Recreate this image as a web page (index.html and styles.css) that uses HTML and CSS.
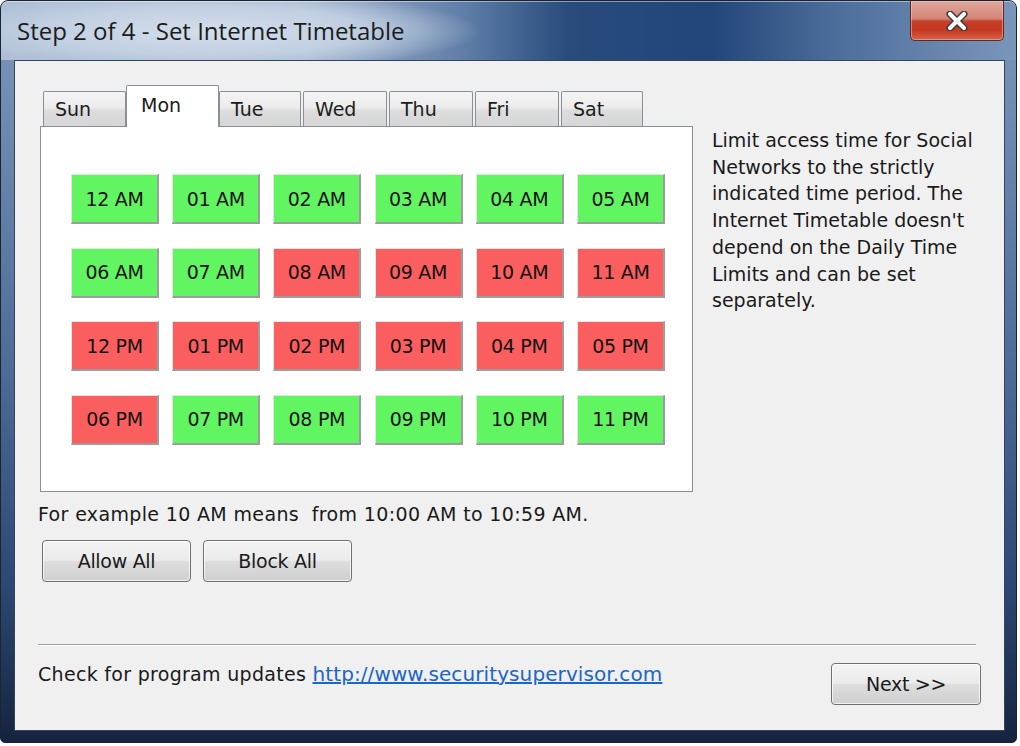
FILE: index.html
```html
<!DOCTYPE html>
<html>
<head>
<meta charset="utf-8">
<title>Step 2 of 4 - Set Internet Timetable</title>
<link rel="stylesheet" href="styles.css">
</head>
<body>
<div class="window">
  <div class="titlebar">
    <div class="title">Step 2 of 4 - Set Internet Timetable</div>
    <div class="close">
      <svg width="24" height="20" viewBox="0 0 24 20">
        <path d="M5 3 L19 17 M19 3 L5 17" stroke="#3a3a3a" stroke-width="7" stroke-linecap="round" fill="none"/>
        <path d="M5 3 L19 17 M19 3 L5 17" stroke="#ffffff" stroke-width="4.2" stroke-linecap="round" fill="none"/>
      </svg>
    </div>
  </div>
  <div class="client">
    <div class="top">
      <div class="leftcol">
        <div class="tabs">
          <div class="tab t-sun">Sun</div>
          <div class="tab t-mon active">Mon</div>
          <div class="tab t-tue">Tue</div>
          <div class="tab t-wed">Wed</div>
          <div class="tab t-thu">Thu</div>
          <div class="tab t-fri">Fri</div>
          <div class="tab t-sat">Sat</div>
        </div>
        <div class="panel">
          <div class="grid">
            <div class="cell on">12 AM</div>
            <div class="cell on">01 AM</div>
            <div class="cell on">02 AM</div>
            <div class="cell on">03 AM</div>
            <div class="cell on">04 AM</div>
            <div class="cell on">05 AM</div>
            <div class="cell on">06 AM</div>
            <div class="cell on">07 AM</div>
            <div class="cell off">08 AM</div>
            <div class="cell off">09 AM</div>
            <div class="cell off">10 AM</div>
            <div class="cell off">11 AM</div>
            <div class="cell off">12 PM</div>
            <div class="cell off">01 PM</div>
            <div class="cell off">02 PM</div>
            <div class="cell off">03 PM</div>
            <div class="cell off">04 PM</div>
            <div class="cell off">05 PM</div>
            <div class="cell off">06 PM</div>
            <div class="cell on">07 PM</div>
            <div class="cell on">08 PM</div>
            <div class="cell on">09 PM</div>
            <div class="cell on">10 PM</div>
            <div class="cell on">11 PM</div>
          </div>
        </div>
        <div class="example">For example 10 AM means&nbsp; from 10:00 AM to 10:59 AM.</div>
        <div class="btnrow">
          <div class="btn">Allow All</div>
          <div class="btn">Block All</div>
        </div>
      </div>
      <div class="info">Limit access time for Social<br>Networks to the strictly<br>indicated time period. The<br>Internet Timetable doesn't<br>depend on the Daily Time<br>Limits and can be set<br>separately.</div>
    </div>
    <div class="sep"></div>
    <div class="bottom">
      <div class="updates">Check for program updates <a class="link" href="#">http://www.securitysupervisor.com</a></div>
      <div class="btn next">Next &gt;&gt;</div>
    </div>
  </div>
</div>
</body>
</html>
```

FILE: styles.css
```css
html, body {
  margin: 0;
  padding: 0;
  background: #ffffff;
}
body {
  width: 1020px;
  height: 746px;
  overflow: hidden;
  font-family: "DejaVu Sans", "Liberation Sans", sans-serif;
  color: #1a1a1a;
}
.window {
  box-sizing: border-box;
  width: 1017px;
  height: 743px;
  border: 1px solid #1b2433;
  border-radius: 8px 8px 5px 5px;
  background: linear-gradient(180deg, #7f98bb 0%, #6c88ae 18%, #4d6b96 50%, #2b4670 80%, #15243e 100%);
  display: flex;
  flex-direction: column;
  overflow: hidden;
}
.titlebar {
  height: 59px;
  display: flex;
  align-items: flex-start;
  justify-content: space-between;
  background:
    radial-gradient(ellipse 270px 40px at 210px 30px, rgba(214,224,236,0.95) 0%, rgba(200,213,230,0.8) 60%, rgba(200,213,230,0) 100%),
    linear-gradient(90deg, #aebfd6 0%, #a3b6cf 30%, #5d7ca6 46%, #284b7c 56%, #234679 70%, #4c6d9a 82%, #7b96bb 100%);
  border-radius: 7px 7px 0 0;
  box-shadow: inset 0 1px 0 rgba(255,255,255,0.45);
}
.title {
  margin: 14px 0 0 16px;
  font-family: "Open Sans", "Noto Sans", sans-serif;
  font-size: 24px;
  line-height: 32px;
  color: #1c1c1c;
}
.close {
  box-sizing: border-box;
  width: 94px;
  height: 40px;
  margin-right: 12px;
  border: 1px solid #5b2a25;
  border-top: none;
  border-radius: 0 0 5px 5px;
  background: linear-gradient(180deg, #e0a79c 0%, #d48677 45%, #c3402a 52%, #c6381f 75%, #d4644c 100%);
  box-shadow: inset 0 0 0 1px rgba(255,210,200,0.45);
  display: flex;
  align-items: center;
  justify-content: center;
}
.client {
  flex: 1;
  margin: 0 11px 11px 13px;
  box-sizing: border-box;
  border: 1px solid #33445c;
  background: #f0f0f0;
  padding: 24px 0 0 23px;
  display: flex;
  flex-direction: column;
}
.top {
  display: flex;
}
.leftcol {
  width: 655px;
  display: flex;
  flex-direction: column;
}
.tabs {
  display: flex;
  align-items: flex-end;
  height: 41px;
  padding-left: 5px;
  position: relative;
  z-index: 2;
}
.tab {
  box-sizing: border-box;
  height: 35px;
  border: 1px solid #8b8e94;
  border-bottom: none;
  border-radius: 2px 2px 0 0;
  background: linear-gradient(180deg, #f4f4f4 0%, #ececec 45%, #dcdcdc 55%, #d6d6d6 100%);
  font-size: 19px;
  line-height: 34px;
  padding-left: 11px;
  color: #1c1c1c;
}
.tab.active {
  height: 42px;
  margin-bottom: -1px;
  background: #ffffff;
  line-height: 38px;
  padding-left: 14px;
}
.t-sun { width: 83px; }
.t-mon { width: 93px; }
.t-tue { width: 82px; }
.t-wed { width: 84px; margin-left: 2px; }
.t-thu { width: 84px; margin-left: 2px; }
.t-fri { width: 84px; margin-left: 2px; }
.t-sat { width: 82px; margin-left: 2px; }
.panel {
  box-sizing: border-box;
  width: 653px;
  height: 366px;
  margin-left: 2px;
  border: 1px solid #8b8e94;
  background: #ffffff;
  padding: 47px 0 0 30px;
  position: relative;
  z-index: 1;
}
.grid {
  display: grid;
  grid-template-columns: repeat(6, 88px);
  grid-auto-rows: 50px;
  column-gap: 13.2px;
  row-gap: 23.5px;
}
.cell {
  box-sizing: border-box;
  border-top: 1px solid #e4e4e4;
  border-left: 1px solid #e4e4e4;
  border-right: 2px solid #9d9d9d;
  border-bottom: 2px solid #9d9d9d;
  display: flex;
  align-items: center;
  justify-content: center;
  font-size: 19px;
  letter-spacing: -0.3px;
  color: #111;
}
.cell.on { background: #62f562; }
.cell.off { background: #fb5e5e; }
.example {
  margin-top: 9px;
  font-size: 19px;
  line-height: 26px;
  letter-spacing: 0.35px;
  white-space: nowrap;
}
.btnrow {
  display: flex;
  gap: 12px;
  margin: 13px 0 0 4px;
}
.btn {
  box-sizing: border-box;
  width: 149px;
  height: 42px;
  border: 1px solid #707070;
  border-radius: 4px;
  background: linear-gradient(180deg, #f3f3f3 0%, #ebebeb 48%, #dddddd 52%, #cfcfcf 100%);
  box-shadow: inset 0 0 0 1px rgba(255,255,255,0.7);
  display: flex;
  align-items: center;
  justify-content: center;
  font-size: 19px;
  letter-spacing: -0.3px;
  color: #1a1a1a;
}
.info {
  margin: 42px 0 0 19px;
  font-size: 19px;
  line-height: 26.7px;
  white-space: nowrap;
}
.sep {
  width: 938px;
  height: 1px;
  margin-top: 62px;
  background: #a0a0a0;
  border-bottom: 1px solid #ffffff;
}
.bottom {
  display: flex;
  justify-content: space-between;
  align-items: flex-start;
  width: 943px;
  margin-top: 15px;
}
.updates {
  font-size: 19px;
  line-height: 26px;
  letter-spacing: 0.3px;
  white-space: nowrap;
}
.link {
  color: #1a66cc;
  text-decoration: underline;
  font-size: 20px;
  letter-spacing: 0.1px;
}
.btn.next {
  width: 150px;
  margin-top: 2px;
}
```
